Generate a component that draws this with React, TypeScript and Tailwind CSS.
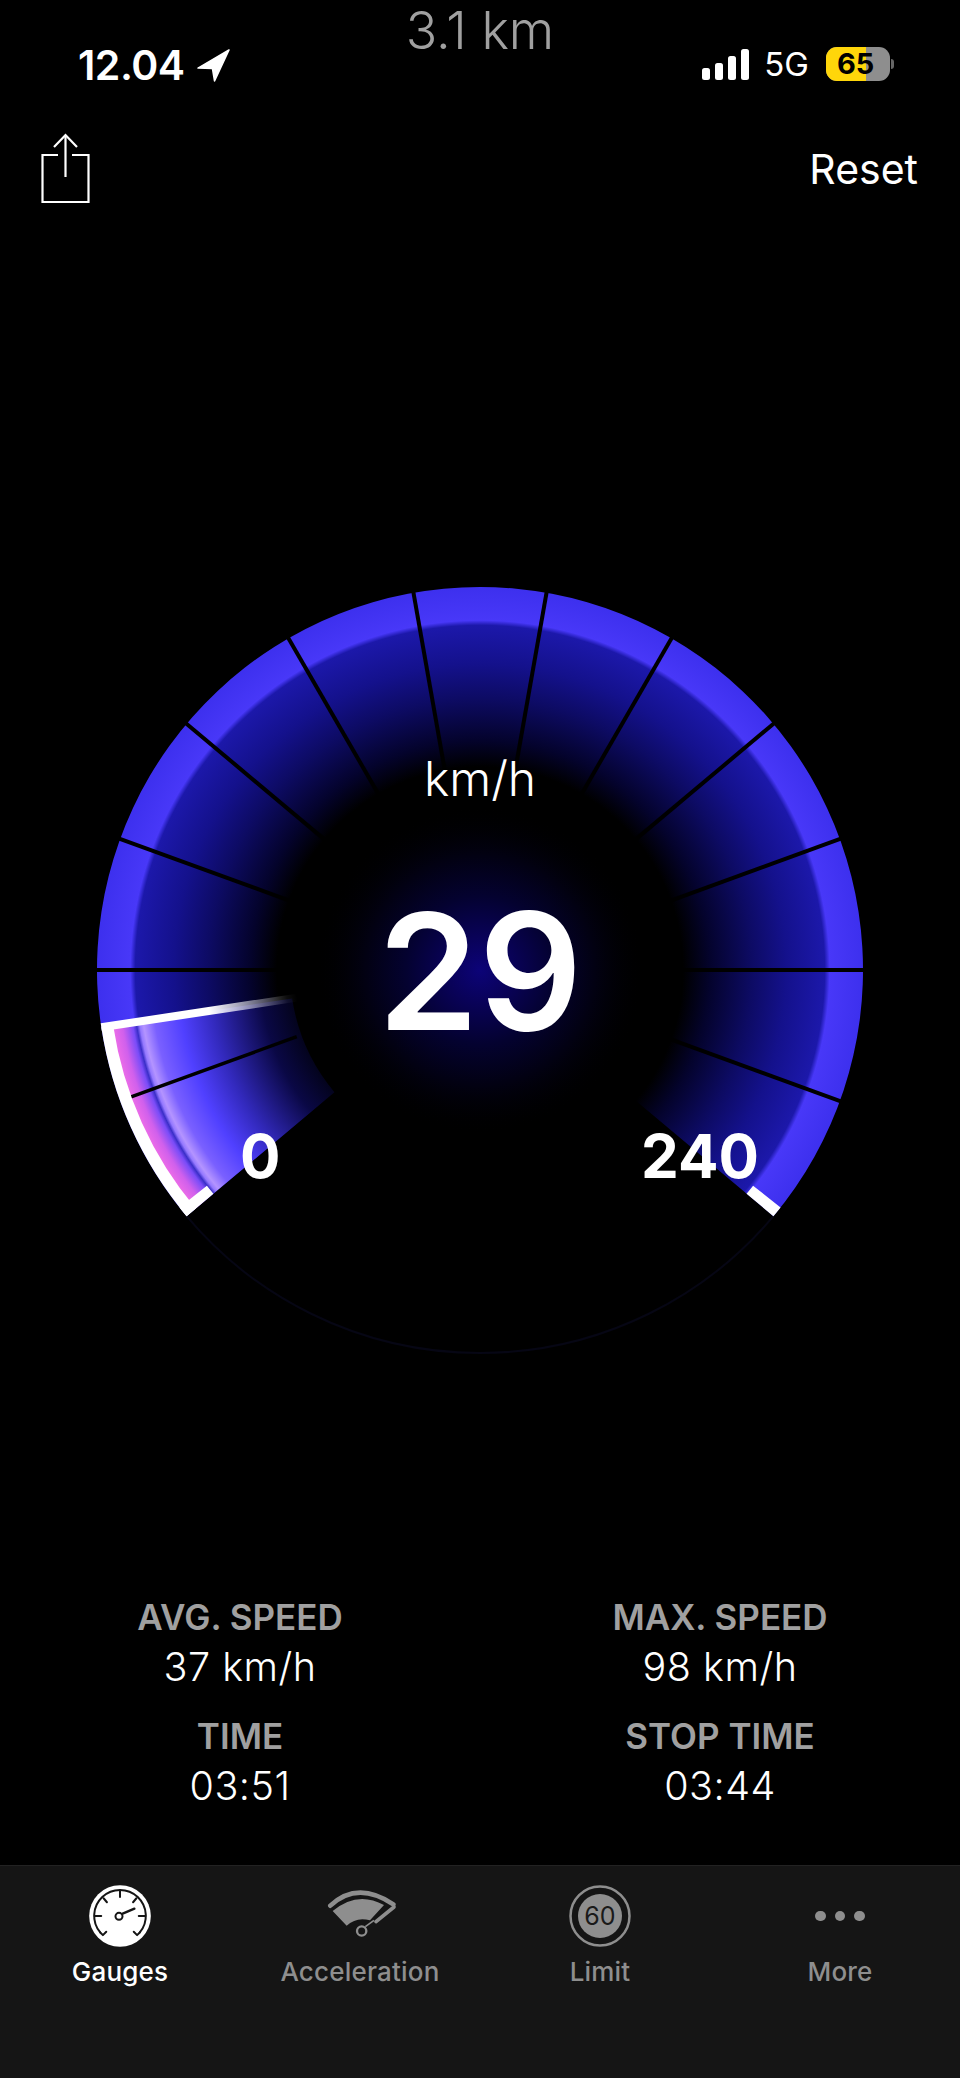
const CX = 480;
const CY = 970;

function pt(r: number, deg: number) {
  const a = (deg * Math.PI) / 180;
  return `${(CX + r * Math.cos(a)).toFixed(2)} ${(CY - r * Math.sin(a)).toFixed(2)}`;
}

// clockwise on screen, from a1 down to a2
function sector(ri: number, ro: number, a1: number, a2: number) {
  const large = a1 - a2 > 180 ? 1 : 0;
  return `M${pt(ro, a1)} A${ro} ${ro} 0 ${large} 1 ${pt(ro, a2)} L${pt(ri, a2)} A${ri} ${ri} 0 ${large} 0 ${pt(ri, a1)} Z`;
}

const ticks = [-20, 0, 20, 40, 60, 80, 100, 120, 140, 160, 180];
const stats = [
  { label: "AVG. SPEED", value: "37 km/h" },
  { label: "MAX. SPEED", value: "98 km/h" },
  { label: "TIME", value: "03:51" },
  { label: "STOP TIME", value: "03:44" },
];

function Gauge() {
  const needleAngle = 188.6;
  return (
    <div className="relative h-[800px] w-full">
      <svg width="960" height="800" viewBox="0 570 960 800" className="block">
        <defs>
          <radialGradient id="ring" gradientUnits="userSpaceOnUse" cx={CX} cy={CY} r="383">
            <stop offset="0.53" stopColor="#000000" />
            <stop offset="0.6" stopColor="#04032c" />
            <stop offset="0.71" stopColor="#0d0b64" />
            <stop offset="0.8" stopColor="#14118c" />
            <stop offset="0.9" stopColor="#1c18aa" />
            <stop offset="0.913" stopColor="#4838f8" />
            <stop offset="1" stopColor="#3d30ee" />
          </radialGradient>
          <radialGradient id="glow" gradientUnits="userSpaceOnUse" cx={CX} cy={CY} r="165">
            <stop offset="0" stopColor="#0c0378" />
            <stop offset="0.2" stopColor="#090258" />
            <stop offset="0.45" stopColor="#040230" />
            <stop offset="0.7" stopColor="#020112" />
            <stop offset="1" stopColor="#000000" stopOpacity="0" />
          </radialGradient>
          <radialGradient id="fill" gradientUnits="userSpaceOnUse" cx={CX} cy={CY} r="383">
            <stop offset="0.49" stopColor="#03031a" />
            <stop offset="0.575" stopColor="#0a0845" />
            <stop offset="0.705" stopColor="#3229bc" />
            <stop offset="0.79" stopColor="#5040ff" />
            <stop offset="0.86" stopColor="#7a60ff" />
            <stop offset="0.89" stopColor="#b494ff" />
            <stop offset="0.9" stopColor="#9478ff" />
            <stop offset="0.908" stopColor="#3a2ec8" />
            <stop offset="0.918" stopColor="#7a4cf8" />
            <stop offset="0.945" stopColor="#d060ec" />
            <stop offset="0.97" stopColor="#ec6ce8" />
          </radialGradient>
          <linearGradient
            id="needle"
            gradientUnits="userSpaceOnUse"
            x1={CX + 383 * Math.cos((needleAngle * Math.PI) / 180)}
            y1={CY - 383 * Math.sin((needleAngle * Math.PI) / 180)}
            x2={CX + 185 * Math.cos((needleAngle * Math.PI) / 180)}
            y2={CY - 185 * Math.sin((needleAngle * Math.PI) / 180)}
          >
            <stop offset="0.55" stopColor="#ffffff" />
            <stop offset="0.95" stopColor="#ffffff" stopOpacity="0.05" />
            <stop offset="1" stopColor="#ffffff" stopOpacity="0" />
          </linearGradient>
        </defs>

        {/* faint rest of the dial */}
        <path d={`M${pt(383, -40)} A383 383 0 0 1 ${pt(383, 220)}`} fill="none" stroke="#060614" strokeWidth="2" />

        <path d={sector(0.01, 383, 220, -40)} fill="url(#ring)" />
        <circle cx={CX} cy={CY} r="165" fill="url(#glow)" />

        {ticks.map((a) => (
          <path key={a} d={`M${pt(384, a)} L${pt(190, a)}`} stroke="#000000" strokeWidth="4" />
        ))}

        <path d={sector(190, 372, 220, needleAngle)} fill="url(#fill)" />
        <path d={`M${pt(372, 200)} L${pt(195, 200)}`} stroke="#000000" strokeWidth="3.5" />

        <path d={`M${pt(377, 220)} A377 377 0 0 1 ${pt(377, needleAngle)}`} fill="none" stroke="#ffffff" strokeWidth="12" />
        <path d={`M${pt(383, needleAngle)} L${pt(185, needleAngle)}`} stroke="url(#needle)" strokeWidth="8" />
        <path d={sector(348, 383, 220, 218.3)} fill="#ffffff" />
        <path d={sector(348, 383, -38.3, -40)} fill="#ffffff" />
      </svg>

      <span className="absolute left-0 top-[181px] w-full text-center text-[48px] leading-[56px] font-light text-white">km/h</span>
      <span className="absolute left-0 top-[301px] w-full text-center text-[162px] leading-[200px] font-semibold text-white">29</span>
      <span className="absolute left-[240px] top-[550px] w-[40px] text-center text-[60px] leading-[72px] font-bold text-white">0</span>
      <span className="absolute left-[640px] top-[550px] w-[120px] text-center text-[60px] leading-[72px] font-bold text-white">240</span>
    </div>
  );
}

function GaugesIcon() {
  return (
    <svg width="62" height="62" viewBox="0 0 222 222">
      <circle cx="111" cy="111" r="92" fill="#ffffff" transform="translate(111 111) scale(1.2) translate(-111 -111)" />
      <g stroke="#151515" fill="none" strokeLinecap="round" transform="translate(111 111) scale(1.2) translate(-111 -111)">
        <path d="M52 160A77 77 0 1 1 170 160" strokeWidth="6" />
        <path d="M52 160L60 168L70 158M170 160L162 168L152 158" strokeWidth="6" strokeLinejoin="round" />
        <path d="M111 34V54M62 58L72 70M160 58L150 70M35 111H55M167 111H187" strokeWidth="6" />
        <circle cx="108" cy="112" r="10.5" strokeWidth="6" />
        <path d="M119 104L154 89" strokeWidth="7" />
      </g>
    </svg>
  );
}

function AccelerationIcon() {
  return (
    <svg width="84" height="64" viewBox="0 0 252 192" className="mb-[7px] ml-[4px]">
      <path d="M31 74Q112 -2 220 70" fill="none" stroke="#8e8e8e" strokeWidth="14" strokeLinecap="round" />
      <path d="M38 90Q112 28 192 72L150 118Q110 106 80 134Z" fill="#8e8e8e" />
      <path d="M168 122L222 78" fill="none" stroke="#8e8e8e" strokeWidth="11" strokeLinecap="round" />
      <path d="M136 137L162 118" fill="none" stroke="#8e8e8e" strokeWidth="5" />
      <circle cx="125" cy="150" r="14" fill="#151515" stroke="#8e8e8e" strokeWidth="7" />
    </svg>
  );
}

function LimitIcon() {
  return (
    <svg width="62" height="62" viewBox="0 0 62 62">
      <circle cx="31" cy="31" r="29.5" fill="none" stroke="#8e8e8e" strokeWidth="2.5" />
      <circle cx="31" cy="31" r="22" fill="#8e8e8e" />
      <text x="31" y="40" textAnchor="middle" fontSize="25" fill="#1a1a1a">60</text>
    </svg>
  );
}

function MoreIcon() {
  return (
    <div className="flex h-[62px] items-center justify-center gap-[9px]">
      <span className="h-[10.5px] w-[10.5px] rounded-full bg-[#8e8e8e]" />
      <span className="h-[10.5px] w-[10.5px] rounded-full bg-[#8e8e8e]" />
      <span className="h-[10.5px] w-[10.5px] rounded-full bg-[#8e8e8e]" />
    </div>
  );
}

const tabs = [
  { label: "Gauges", Icon: GaugesIcon, active: true },
  { label: "Acceleration", Icon: AccelerationIcon, active: false },
  { label: "Limit", Icon: LimitIcon, active: false },
  { label: "More", Icon: MoreIcon, active: false },
];

export default function App() {
  return (
    <div className="flex h-[2078px] w-[960px] flex-col overflow-hidden bg-black font-['Inter',sans-serif] text-white">
      {/* status bar */}
      <div className="grid h-[130px] grid-cols-[1fr_auto_1fr] items-start">
        <div className="ml-[78px] mt-[44px] flex items-center gap-[12px]">
          <span className="text-[41px] leading-[42px] font-semibold tracking-[-0.5px]">12.04</span>
          <svg width="33" height="33" viewBox="0 0 32 32">
            <path d="M31 1L1 18.5L15 19L17 31Z" fill="#ffffff" stroke="#ffffff" strokeWidth="1.5" strokeLinejoin="round" />
          </svg>
        </div>
        <span className="mt-[4px] text-[52px] leading-[54px] font-light text-[#a0a0a0]">3.1 km</span>
        <div className="mr-[66px] mt-[47px] flex items-center justify-end">
          <div className="flex h-[32px] items-end gap-[5px]">
            <span className="h-[12px] w-[8px] rounded-[2.5px] bg-white" />
            <span className="h-[17px] w-[8px] rounded-[2.5px] bg-white" />
            <span className="h-[24px] w-[8px] rounded-[2.5px] bg-white" />
            <span className="h-[31px] w-[8px] rounded-[2.5px] bg-white" />
          </div>
          <span className="ml-[15px] text-[33px] leading-[34px]">5G</span>
          <div className="relative ml-[17px] h-[34px] w-[64px] overflow-hidden rounded-[11px] bg-[#8e8e8e]">
            <div className="h-full w-[40px] bg-[#ffd60a]" />
            <span className="absolute left-[11px] top-0 text-[29px] leading-[34px] font-bold text-black">65</span>
          </div>
          <span className="ml-[1px] h-[10px] w-[3px] rounded-r-full bg-[#666666]" />
        </div>
      </div>

      {/* toolbar */}
      <div className="flex h-[75px] items-start justify-between pl-[41px] pr-[42px]">
        <svg width="50" height="76" viewBox="0 0 50 76">
          <path d="M17 25H1.5V72H47.5V25H31" fill="none" stroke="#ffffff" strokeWidth="2.2" />
          <path d="M24.5 5V47" stroke="#ffffff" strokeWidth="2.2" />
          <path d="M13 17L24.5 5L36 17" fill="none" stroke="#ffffff" strokeWidth="2.2" />
        </svg>
        <span className="mt-[15px] text-[41px] leading-[48px]">Reset</span>
      </div>

      <div className="h-[365px]" />
      <Gauge />

      {/* trip stats */}
      <div className="mt-[227px] grid grid-cols-2">
        {stats.map((s) => (
          <div key={s.label} className="flex h-[119px] flex-col items-center">
            <span className="text-[35px] leading-[40px] font-semibold text-[#a0a0a0]">{s.label}</span>
            <span className="mt-[8px] text-[39.5px] leading-[44px] font-light tracking-[0.5px] text-white">{s.value}</span>
          </div>
        ))}
      </div>

      {/* tab bar */}
      <nav className="mt-auto grid h-[213px] grid-cols-4 border-t border-[#222222] bg-[#151515] pt-[18px]">
        {tabs.map(({ label, Icon, active }) => (
          <div key={label} className="flex flex-col items-center">
            <div className="flex h-[64px] w-full items-center justify-center">
              <Icon />
            </div>
            <span className={`mt-[8px] text-[26px] leading-[32px] font-medium tracking-[0.2px] ${active ? "text-white" : "text-[#8e8e8e]"}`}>
              {label}
            </span>
          </div>
        ))}
      </nav>
    </div>
  );
}
